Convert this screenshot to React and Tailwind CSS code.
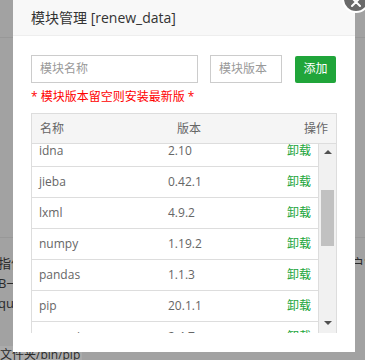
const rows = [
  { name: 'idna', version: '2.10' },
  { name: 'jieba', version: '0.42.1' },
  { name: 'lxml', version: '4.9.2' },
  { name: 'numpy', version: '1.19.2' },
  { name: 'pandas', version: '1.1.3' },
  { name: 'pip', version: '20.1.1' },
  { name: 'pyparsing', version: '2.4.7' },
]

export default function App() {
  return (
    <div className="relative w-[365px] h-[360px] overflow-hidden bg-[#a2a2a2] font-['Open_Sans','Noto_Sans_CJK_SC',sans-serif]">
      {/* page behind the overlay */}
      <div className="flex flex-col">
        <div className="h-[38px] border-b border-[#989898]" />
        <div className="h-[199px]" />
        <div className="border-t border-[#989898] pt-[15px] flex justify-between text-[13px] text-[#2a2a2a] leading-[20px]">
          <div className="flex flex-col -ml-[2px]">
            <span>指件</span>
            <span>B一</span>
            <span>qui</span>
          </div>
          <span className="mr-[-12px]">户管</span>
        </div>
        <div className="mt-[33px] w-[82px] bg-[#ababab] text-[12px] text-[#2a2a2a] leading-[18px] whitespace-nowrap">文件夹/bin/pip</div>
      </div>

      {/* modal */}
      <div className="absolute left-[13px] top-0 w-[342px] h-[352px] bg-white flex flex-col">
        <div className="h-[36px] bg-[#f8f8f8] border-b border-[#eee] flex items-center pl-[18px] text-[14px] text-[#333]">
          模块管理 [renew_data]
        </div>
        <div className="px-[18px] pt-[19px] flex flex-col">
          <div className="flex items-center">
            <div className="w-[167px] h-[28px] border border-[#ccc] flex items-center pl-[8px] text-[12px] text-[#999]">模块名称</div>
            <div className="ml-[12px] w-[72px] h-[28px] border border-[#ccc] flex items-center pl-[8px] text-[12px] text-[#999]">模块版本</div>
            <div className="ml-[13px] w-[41px] h-[27px] bg-[#20a53a] rounded-[2px] flex items-center justify-center text-[12px] text-white">添加</div>
          </div>
          <div className="mt-[6px] text-[12px] text-[#ff0000] leading-[16px]">* 模块版本留空则安装最新版 *</div>
          <div className="mt-[8px] w-[306px] border border-[#ddd] border-b-0">
            <div className="h-[30px] bg-[#f5f5f5] border-b border-[#ddd] flex items-center text-[12px] text-[#666] px-[8px]">
              <span className="w-[137px]">名称</span>
              <span className="flex-1">版本</span>
              <span>操作</span>
            </div>
            <div className="flex h-[189px] overflow-hidden">
              <div className="flex-1 overflow-hidden border-r border-[#ddd]">
                <div className="-mt-[8px]">
                  {rows.map((r) => (
                    <div key={r.name} className="h-[31px] border-b border-[#ddd] flex items-center px-[7px] text-[12px] text-[#666]">
                      <span className="w-[129px]">{r.name}</span>
                      <span className="flex-1">{r.version}</span>
                      <span className="text-[#20a53a]">卸载</span>
                    </div>
                  ))}
                </div>
              </div>
              <div className="w-[17px] bg-[#f1f1f1] flex flex-col items-center">
                <div className="mt-[6px] w-0 h-0 border-l-[4px] border-r-[4px] border-b-[4px] border-l-transparent border-r-transparent border-b-[#505050]" />
                <div className="mt-[36px] w-[13px] h-[56px] bg-[#c1c1c1]" />
                <div className="mt-[75px] w-0 h-0 border-l-[4px] border-r-[4px] border-t-[4px] border-l-transparent border-r-transparent border-t-[#505050]" />
              </div>
            </div>
          </div>
        </div>
      </div>

      {/* close button */}
      <div className="absolute left-[342px] top-[-15px] w-[28px] h-[28px] rounded-full bg-[#6a6a6a] border-2 border-white flex items-center justify-center">
        <svg width="12" height="12" viewBox="0 0 12 12" className="mt-[6px]">
          <path d="M2 2L10 10M10 2L2 10" stroke="white" strokeWidth="2" strokeLinecap="round" />
        </svg>
      </div>
    </div>
  )
}
